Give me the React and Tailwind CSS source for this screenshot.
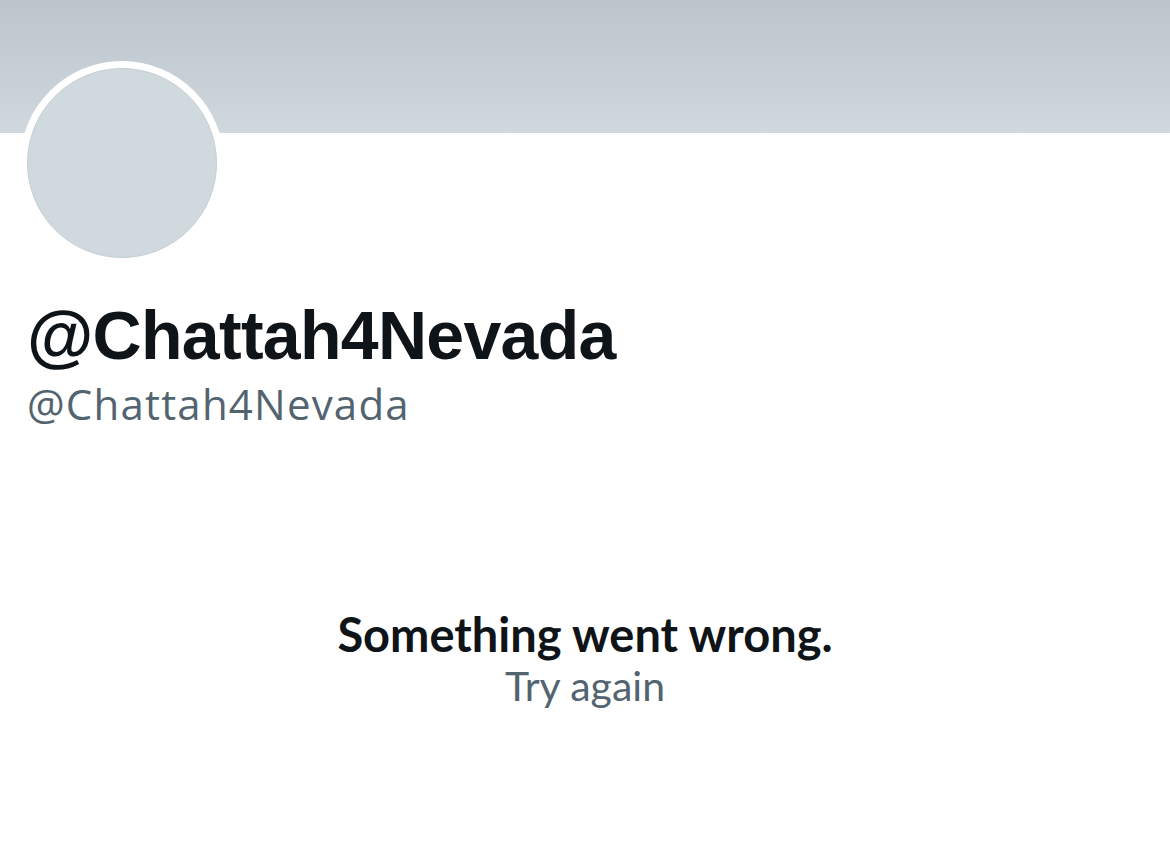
import React from "react";

export default function App() {
  return (
    <div className="w-[1170px] h-[857px] bg-white overflow-hidden">
      <div className="h-[133px] bg-gradient-to-b from-[#bcc5cc] to-[#d0d8de]" />
      <div className="pl-[20px]">
        <div className="-mt-[72px] w-[204px] h-[204px] rounded-full bg-white p-[7px]">
          <div className="w-full h-full rounded-full bg-[#d0d9de] border border-[#c5ced4]" />
        </div>
      </div>
      <div className="pl-[27px] mt-[30px]">
        <h1 className="font-['Liberation_Sans',Arial,sans-serif] font-bold text-[68px] leading-[80px] text-[#0f1419] tracking-[-0.7px]">
          @Chattah4Nevada
        </h1>
        <p className="font-['Open_Sans',sans-serif] text-[42px] leading-[50px] text-[#536471] mt-[4px] tracking-[1.2px]">
          @Chattah4Nevada
        </p>
      </div>
      <div className="mt-[178px] flex flex-col items-center">
        <p className="font-['Lato',sans-serif] font-bold text-[47px] leading-[54px] text-[#0f1419]">
          Something went wrong.
        </p>
        <p className="font-['Lato',sans-serif] text-[41px] leading-[50px] text-[#536471]">
          Try again
        </p>
      </div>
    </div>
  );
}
